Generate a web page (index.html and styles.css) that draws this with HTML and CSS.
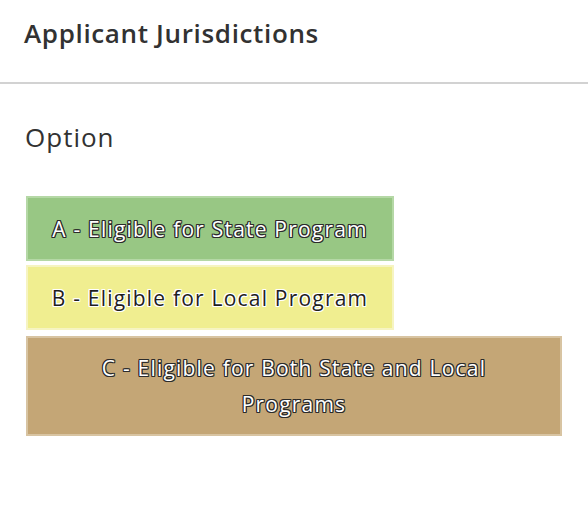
FILE: index.html
```html
<!DOCTYPE html>
<html>
<head>
<meta charset="utf-8">
<link rel="stylesheet" href="styles.css">
</head>
<body>
<div class="panel">
  <header class="header">
    <h1 class="title">Applicant Jurisdictions</h1>
  </header>
  <section class="legend">
    <h2 class="legend-title">Option</h2>
    <ul class="items">
      <li class="item item-a"><span class="label halo-dark">A - Eligible for State Program</span></li>
      <li class="item item-b"><span class="label halo-light">B - Eligible for Local Program</span></li>
      <li class="item item-c"><span class="label halo-dark">C - Eligible for Both State and Local Programs</span></li>
    </ul>
  </section>
</div>
</body>
</html>
```

FILE: styles.css
```css
* { box-sizing: border-box; }
html, body { margin: 0; padding: 0; background: #fff; }
body {
  font-family: "Open Sans", Lato, "Liberation Sans", sans-serif;
  color: #323232;
  width: 588px;
  height: 516px;
  overflow: hidden;
}
.header {
  height: 84px;
  border-bottom: 2px solid #d2d2d2;
  padding: 15px 24px 0;
}
.title {
  margin: 0;
  font-size: 26px;
  font-weight: 600;
  letter-spacing: 0.65px;
  line-height: 36px;
  color: #323232;
}
.legend {
  padding: 36px 25px 0;
}
.legend-title {
  margin: 0;
  font-size: 26px;
  font-weight: 400;
  letter-spacing: 1px;
  line-height: 34px;
  color: #323232;
}
.items {
  list-style: none;
  margin: 42px 0 0 1px;
  padding: 0;
  display: flex;
  flex-direction: column;
  align-items: flex-start;
}
.item {
  display: flex;
  align-items: center;
  justify-content: center;
  text-align: center;
  border: 2px solid;
  font-size: 21px;
  letter-spacing: 1.2px;
  line-height: 36px;
}
.item-a {
  width: 368px;
  height: 65px;
  background: #98c784;
  border-color: #b5d8a6;
}
.item-b {
  width: 368px;
  height: 65px;
  margin-top: 4px;
  background: #f0ee90;
  border-color: #f6f4c2;
}
.item-c {
  width: 536px;
  height: 100px;
  margin-top: 6px;
  padding: 0 60px;
  background: #c4a676;
  border-color: #d8c4a2;
}
.halo-dark {
  color: #fff;
  text-shadow:
    1px 0 0 #2b2b2b, -1px 0 0 #2b2b2b, 0 1px 0 #2b2b2b, 0 -1px 0 #2b2b2b,
    1px 1px 0 #2b2b2b, -1px -1px 0 #2b2b2b, 1px -1px 0 #2b2b2b, -1px 1px 0 #2b2b2b;
}
.halo-light {
  color: #1e1e1e;
  text-shadow:
    1px 0 0 #fff, -1px 0 0 #fff, 0 1px 0 #fff, 0 -1px 0 #fff,
    1px 1px 0 #fff, -1px -1px 0 #fff, 1px -1px 0 #fff, -1px 1px 0 #fff;
}
```
